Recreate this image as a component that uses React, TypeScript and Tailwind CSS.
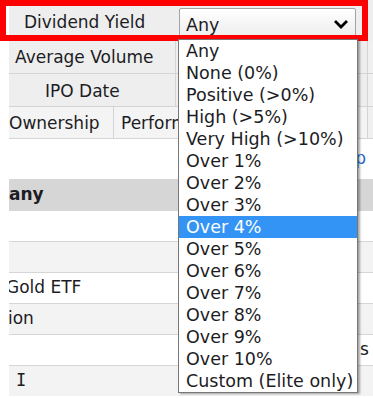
const options = [
  "Any",
  "None (0%)",
  "Positive (>0%)",
  "High (>5%)",
  "Very High (>10%)",
  "Over 1%",
  "Over 2%",
  "Over 3%",
  "Over 4%",
  "Over 5%",
  "Over 6%",
  "Over 7%",
  "Over 8%",
  "Over 9%",
  "Over 10%",
  "Custom (Elite only)",
];

const rows = [
  { text: "", bg: "bg-white" },
  { text: "", bg: "bg-[#f3f3f3]" },
  { text: "Gold ETF", bg: "bg-white", shift: "-ml-[3px]" },
  { text: "ion", bg: "bg-[#f3f3f3]", shift: "-ml-[1px]" },
  { text: "", bg: "bg-white", right: "s" },
  { text: "I", bg: "bg-[#f3f3f3]", shift: "ml-[7px] font-['DejaVu_Sans_Mono']" },
];

export default function App() {
  return (
    <div
      className="relative w-[373px] h-[398px] overflow-hidden bg-white text-[#1c1c24] text-[17px]"
      style={{ fontFamily: '"DejaVu Sans", Verdana, sans-serif' }}
    >
      {/* table behind the open select */}
      <div className="pl-[9px]">
        <div className="flex h-[41px] bg-[#eeeeee]">
          <div className="w-[167px] pl-[15px] pt-[10px]">Dividend Yield</div>
          <div className="pt-[8px] pl-[3px]">
            <div className="flex h-[30px] w-[177px] items-start justify-between rounded-[2px] border border-[#a3a3a3] bg-gradient-to-b from-white to-[#ededed] pl-[6px] pr-[6px] pt-[3px]">
              <span className="text-[17.5px]">Any</span>
              <svg width="16" height="12" viewBox="0 0 16 12" className="mt-[7px]">
                <polyline points="2,2 8,8 14,2" fill="none" stroke="#000" strokeWidth="2.8" />
              </svg>
            </div>
          </div>
        </div>

        <div className="flex h-[33px] border-b border-[#d4d4d4] bg-[#eeeeee]">
          <div className="flex w-[167px] items-center border-r border-[#d4d4d4] pl-[6px] pt-[1px]">Average Volume</div>
          <div className="flex-1" />
          <div className="w-[6px] border-l border-[#d4d4d4] bg-[#f0f0f0]" />
        </div>

        <div className="flex h-[33px] border-b border-[#d4d4d4] bg-[#eeeeee]">
          <div className="flex w-[167px] items-center border-r border-[#d4d4d4] pl-[36px] pt-[3px]">IPO Date</div>
          <div className="flex-1" />
          <div className="w-[6px] border-l border-[#d4d4d4] bg-[#f0f0f0]" />
        </div>

        <div className="flex h-[32px] border-b border-[#d4d4d4] bg-[#f4f4f4]">
          <div className="flex w-[105px] items-center border-r border-[#d4d4d4] pt-[3px]">Ownership</div>
          <div className="flex w-[64px] items-center overflow-hidden whitespace-nowrap pl-[7px] pt-[3px]">Performance</div>
          <div className="flex-1" />
          <div className="w-[6px] border-l border-[#d4d4d4] bg-[#f0f0f0]" />
        </div>

        <div className="flex h-[40px] items-center justify-end pr-[7px] text-[#2266cc]">p</div>

        <div className="flex h-[31px] items-center bg-[#d6d6d6] font-bold">
          <span className="flex-1">any</span>
        </div>

        {rows.map((r, i) => (
          <div key={i} className={`flex h-[31px] items-center overflow-hidden border-t border-[#d6d6d6] ${r.bg}`}>
            <span className={`flex-1 whitespace-nowrap ${r.shift ?? ""}`}>{r.text}</span>
            <span className="w-[13px]">{r.right ?? ""}</span>
          </div>
        ))}
      </div>

      {/* red highlight box */}
      <div className="absolute left-0 top-0 h-[41px] w-[368px] border-[6px] border-[#ff0000]" />

      {/* open option list */}
      <div className="absolute left-[178px] top-[39px] w-[180px] border border-[#777] bg-white text-[17.5px] shadow-[2px_1px_2px_rgba(0,0,0,0.35)]">
        {options.map((o) => (
          <div
            key={o}
            className={`h-[22px] pl-[7px] leading-[22px] whitespace-nowrap ${
              o === "Over 4%" ? "bg-[#3394f5] text-white" : ""
            }`}
          >
            {o}
          </div>
        ))}
      </div>
    </div>
  );
}
